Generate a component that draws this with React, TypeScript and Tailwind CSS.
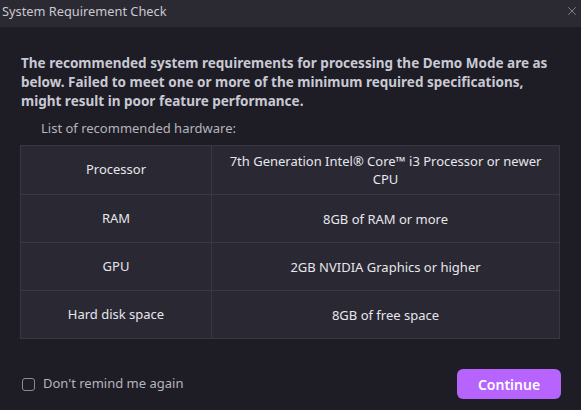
import { X } from 'lucide-react';

const ROWS = [
  { name: 'Processor', value: '7th Generation Intel® Core™ i3 Processor or newer CPU' },
  { name: 'RAM', value: '8GB of RAM or more' },
  { name: 'GPU', value: '2GB NVIDIA Graphics or higher' },
  { name: 'Hard disk space', value: '8GB of free space' },
];

export default function App() {
  return (
    <div
      className="w-[581px] h-[410px] flex flex-col bg-[#1e1d26] text-[#d4d4dc] overflow-hidden"
      style={{ fontFamily: '"Noto Sans", "Open Sans", sans-serif' }}
    >
      {/* Title bar */}
      <div className="h-[27px] shrink-0 bg-[#2b2a33] flex items-center justify-between pl-[2px] pr-[2px]">
        <span className="text-[12.8px] text-[#c9c9d1] leading-none -mt-[5px]">System Requirement Check</span>
        <X className="w-[14px] h-[14px] text-[#9d9ca4] -mt-[6px]" strokeWidth={1.3} />
      </div>

      <div className="flex-1 flex flex-col px-[20px]">
        <p className="mt-[27px] text-[13.5px] font-bold leading-[19px] text-[#c9c9d3] pl-px">
          The recommended system requirements for processing the Demo Mode are as below. Failed to
          meet one or more of the minimum required specifications, might result in poor feature
          performance.
        </p>
        <p className="mt-[8px] ml-[21px] text-[13px] leading-[18px] text-[#b5b5be]">List of recommended hardware:</p>

        <div className="mt-[8px] w-[540px] bg-[#2a2933] border border-[#393842] text-[13px] text-[#e6e6ec]">
          {ROWS.map((row, i) => (
            <div key={row.name} className={`flex h-[48px] ${i > 0 ? 'border-t border-[#393842]' : ''}`}>
              <div className="w-[191px] shrink-0 border-r border-[#393842] flex items-center justify-center text-center">
                {row.name}
              </div>
              <div className="flex-1 flex items-center justify-center text-center px-[12px] leading-[18px]">
                {row.value}
              </div>
            </div>
          ))}
        </div>

        <div className="mt-auto mb-[11px] flex items-center justify-between">
          <label className="flex items-center gap-[8px] ml-[2px] text-[13px] text-[#b5b5be]">
            <span className="w-[13px] h-[13px] rounded-[3px] border border-[#8c8b94]" />
            Don&apos;t remind me again
          </label>
          <button className="w-[104px] h-[30px] rounded-[6px] bg-[#b664fd] text-white text-[14px] font-semibold">
            Continue
          </button>
        </div>
      </div>
    </div>
  );
}
